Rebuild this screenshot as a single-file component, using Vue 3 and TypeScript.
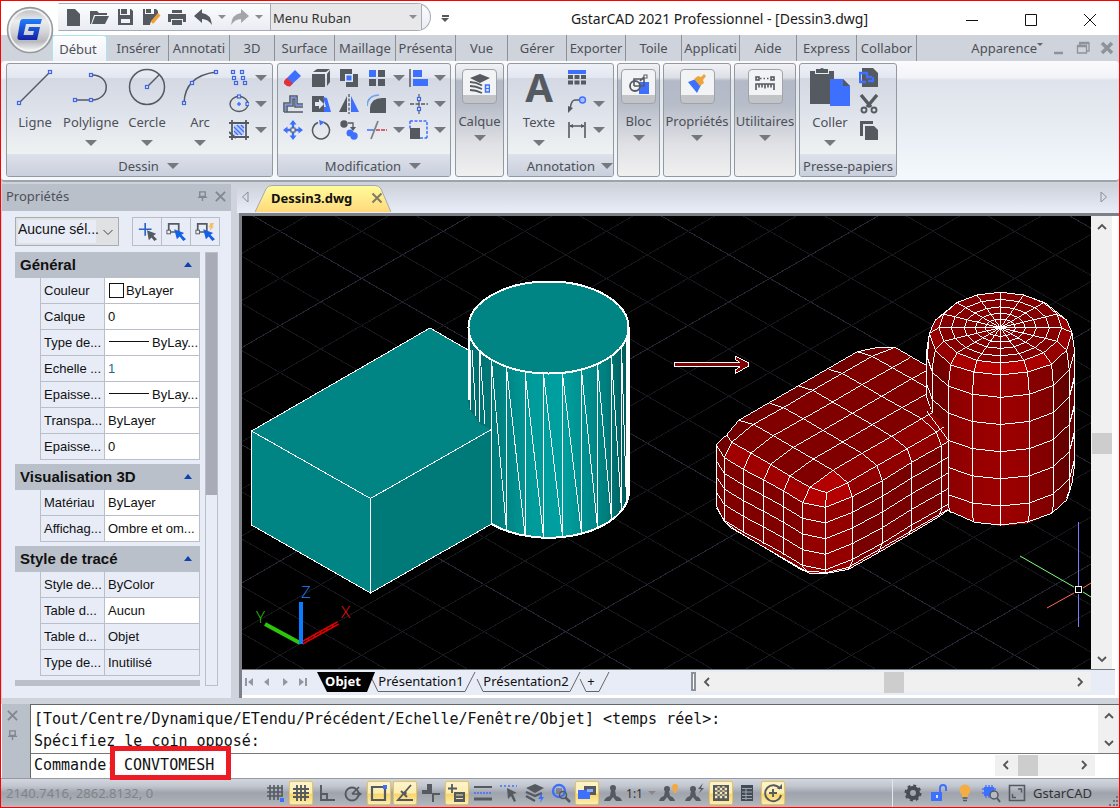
<script setup lang="ts">
import { ref } from 'vue'

interface Tool { icon: string; label: string; drop?: boolean }
interface PropRow { name: string; value: string; kind?: 'color' | 'ltype' | 'blue' | 'locked' }
interface PropSection { title: string; rows: PropRow[] }
interface Line { x1: number; y1: number; x2: number; y2: number; major: boolean }
type Pt = [number, number]

const tabs = ['Début', 'Insérer', 'Annotati', '3D', 'Surface', 'Maillage', 'Présenta', 'Vue', 'Gérer', 'Exporter', 'Toile', 'Applicati', 'Aide', 'Express', 'Collabor']
const activeTab = ref('Début')
const command = ref('CONVTOMESH')

const D = '#555a61'
const B = '#3d70ff'
const dot = (x: number, y: number) => `<rect x="${x - 1.5}" y="${y - 1.5}" width="3" height="3" fill="#dfe7ff" stroke="#3f66e0" stroke-width="1.2"/>`

const icons: Record<string, string> = {
  line: `<path d="M4 35L35 4" stroke="${D}" stroke-width="1.5"/>${dot(4, 35)}${dot(35, 4)}`,
  polyline: `<path d="M4 32H21C40 31 40 7 21 7" fill="none" stroke="${D}" stroke-width="1.5"/>${dot(4, 32)}${dot(20, 32)}${dot(20, 7)}`,
  circle: `<circle cx="20" cy="19" r="17.5" fill="none" stroke="${D}" stroke-width="1.5"/><path d="M20 19L32 7" stroke="${D}" stroke-width="1.5"/>${dot(20, 19)}`,
  arc: `<path d="M4 35Q5 8 36 4" fill="none" stroke="${D}" stroke-width="1.5"/>${dot(4, 35)}${dot(12, 15)}${dot(36, 4)}`,
  points: [[4, 4], [5, 10], [7, 15], [13, 4], [14, 10], [16, 15]].map(([x, y]) => dot(x, y)).join(''),
  ellipse: `<ellipse cx="10" cy="10" rx="9" ry="7.5" fill="none" stroke="${D}" stroke-width="1.4"/><path d="M10 8v4M8 10h4" stroke="${B}" stroke-width="1.4"/>${dot(10, 2.5)}${dot(18.5, 10)}`,
  hatch: `<path d="M0 3H20M0 17H20M3 0V20M17 0V20" stroke="${D}" stroke-width="1.8"/><path d="M5 5h10v10H5z" fill="#b9caff"/><path d="M5 7l8 8M8 5l7 7M5 11l4 4M12 5l3 3" stroke="${B}" stroke-width="1.3"/><path d="M0 12l7 6" stroke="${D}" stroke-width="2"/>`,
  erase: `<path d="M12 2L18 8L8 17L2 12Z" fill="${B}"/><path d="M4 10L10 15.500L7 18.500Q4 19 1 15.500V13Z" fill="#e0323c"/>`,
  box3d: `<path d="M1 6h13v13H1zM2 4L6 1H19L15 4zM16 6l3-4v12l-3 4z" fill="${D}"/>`,
  union: `<path d="M1 1h12v5h6v13H7v-6H1z" fill="${D}"/><path d="M6 6h8v8H6z" fill="#e3e8f2"/><path d="M7.500 7.500h5v5h-5z" fill="${B}"/>`,
  array: `<path d="M2 2h7v7H2z" fill="${B}"/><path d="M11 2h7v7h-7zM2 11h7v7H2zM11 11h7v7h-7z" fill="${D}"/>`,
  align: `<path d="M1 1V19" stroke="${D}" stroke-width="1.5"/><path d="M4 2h9v7H4zM4 11h15v7H4z" fill="${B}"/>`,
  offset: `<path d="M1 18V9H7V2H14V10H20M4 18V12H10V5H12V13H20M1 18H20" fill="none" stroke="${D}" stroke-width="1.6"/><path d="M2.500 17V10.500H8.500V3.500H13V11.500H20" fill="none" stroke="#6e93ff" stroke-width="1"/>`,
  stretch: `<path d="M1 2h12v16H1z" fill="${D}"/><path d="M4 8h4V5l5 5-5 5v-3H4z" fill="#e3e8f2"/><path d="M12 3l4 1 4 14h-7v-5h2z" fill="${B}"/>`,
  mirror: `<path d="M8 2V18H0z" fill="${D}"/><path d="M12 2V18H20z" fill="${B}"/><path d="M10 0V20" stroke="${D}" stroke-width="1.3" stroke-dasharray="3 1.500"/>`,
  fillet: `<path d="M3 19V14Q4 4 15 4H19V19z" fill="${D}"/><path d="M0 12Q1 1 12 1" fill="none" stroke="#6da4f2" stroke-width="1.7"/>`,
  breakat: `<path d="M1 10H19" stroke="${D}" stroke-width="1.5" stroke-dasharray="4 1.500"/><path d="M10 0V20" stroke="${D}" stroke-width="1.2"/>${dot(10, 5)}${dot(10, 15)}`,
  move: `<path d="M10 2V18M2 10H18" stroke="${B}" stroke-width="2.4"/><path d="M10 0l3.500 4.500h-7zM10 20l3.500-4.500h-7zM0 10l4.500-3.500v7zM20 10l-4.500-3.500v7z" fill="${B}"/><rect x="8" y="8" width="4" height="4" fill="#e5e9f4" stroke="${D}"/>`,
  rotate: `<path d="M13 2.500A8.500 8.500 0 1 1 7 2.500" fill="none" stroke="${D}" stroke-width="1.500"/><path d="M8 0l6 2-5 3.500z" fill="${B}"/>`,
  copy: `<circle cx="5" cy="4" r="3.700" fill="${D}"/><path d="M9 3h5v6" fill="none" stroke="${D}" stroke-width="1.300"/><path d="M14 11l-3-4h6z" fill="${D}"/><circle cx="11" cy="13" r="3.500" fill="${B}"/><circle cx="15" cy="16" r="3.700" fill="${B}"/>`,
  trim: `<path d="M0 10H7" stroke="${B}" stroke-width="1.600"/><path d="M9 10H20" stroke="#c93a44" stroke-width="1.600" stroke-dasharray="4 1"/><path d="M11 1L4 19" stroke="#7d828a" stroke-width="1.800"/>`,
  scale: `<path d="M1 1H18V18" fill="none" stroke="${B}" stroke-width="1.500" stroke-dasharray="3 1.500"/><path d="M1 1V9M11 18H18" stroke="${B}" stroke-width="1.500" stroke-dasharray="3 1.500"/><path d="M1 8h10v11H1z" fill="${D}"/>`,
  layers: `<path d="M10 0l10 4-10 5L0 4z" fill="${D}"/><path d="M0 8q6 0 12 3.500M0 12q6 0 12 3M0 16q6 0 12 3" fill="none" stroke="${D}" stroke-width="1.800"/><rect x="15.500" y="11" width="4" height="7" fill="#dfe7ff" stroke="${B}" stroke-width="1.500"/><path d="M15 14.500h5" stroke="${B}"/>`,
  block: `<path d="M10 8h10v12H10z" fill="${B}"/><circle cx="6" cy="12" r="5" fill="none" stroke="${D}" stroke-width="1.800"/><path d="M5 12V5h10v7H5M11 7l5-5" fill="none" stroke="${D}" stroke-width="1.600"/><rect x="15" y="1" width="3" height="3" fill="#fff" stroke="${D}"/>`,
  brush: `<path d="M1 8l8-3 5 6-4 8z" fill="${B}"/><path d="M7 5l4-3 3 1 3-3 2 2-3 4 1 3-4 3z" fill="#eda53c"/>`,
  measure: `<path d="M5 4.500h10" stroke="${D}" stroke-width="1.500" stroke-dasharray="1.500 2"/><rect x="1" y="3" width="3" height="3" fill="none" stroke="${D}" stroke-width="1.600"/><rect x="16" y="3" width="3" height="3" fill="none" stroke="${D}" stroke-width="1.600"/><path d="M1 16V10H19V16M4 10v3.500M7 10v3.500M10 10v4.500M13 10v3.500M16 10v3.500" fill="none" stroke="${D}" stroke-width="1.600"/>`,
  table: `<path d="M1 2h18v4H1z" fill="${B}"/><path d="M1 7h5v4H1zM7.500 7h5v4h-5zM14 7h5v4h-5zM1 12.500h5v4H1zM7.500 12.500h5v4h-5zM14 12.500h5v4h-5z" fill="${D}"/>`,
  leader: `<path d="M3 16Q4 6 8 6H13" fill="none" stroke="${D}" stroke-width="1.600"/><path d="M1 19V12l5 2z" fill="${D}"/><circle cx="15.500" cy="6" r="3" fill="#aabfff" stroke="${B}" stroke-width="1.400"/>`,
  dim: `<path d="M2 2V18M18 2V18M3 6H17" stroke="${D}" stroke-width="1.600"/><path d="M2 6l4-2v4zM18 6l-4-2v4z" fill="${D}"/>`,
  paste: `<path d="M0 3h5v3h14V3h5v33H0z" fill="${D}"/><path d="M6 1h4q2-2 4 0h4v4H6z" fill="${D}"/><path d="M20 11h13l7 7v20H20z" fill="${B}"/><path d="M33 11v7h7z" fill="${D}"/>`,
  link: `<path d="M3 0h11l5 5v14H3z" fill="${D}"/><path d="M0 5h8v4h5M1 6v8h6M9 13h5V9" fill="none" stroke="${B}" stroke-width="2.400"/>`,
  cut: `<path d="M2 1l10 12M18 1L8 13" stroke="${D}" stroke-width="3.400"/><circle cx="5" cy="16" r="2.500" fill="none" stroke="${D}" stroke-width="1.900"/><circle cx="15" cy="16" r="2.500" fill="none" stroke="${D}" stroke-width="1.900"/>`,
  copyclip: `<path d="M1 1h13v3H4v12H1z" fill="${D}"/><path d="M6 6h9l4 4v10H6z" fill="${D}"/>`,
  newfile: `<path d="M4 2h8l5 5v12H4z" fill="${D}"/>`,
  open: `<path d="M1 4h7l2 2h8v2H5L2 17H1z" fill="${D}"/><path d="M6 9h14l-4 8H3z" fill="${D}"/>`,
  save: `<path d="M3 2h2v6h10V2h1l2 2v14H3zM6 2h6v5H6zM6 12v4h9v-4z" fill="${D}" fill-rule="evenodd"/>`,
  saveas: `<path d="M2 2h2v5h9V2h2l2 2v6l-8 8H2zM5 2h5v4H5z" fill="${D}" fill-rule="evenodd"/><path d="M9 18l1-4 7-8 2.500 2.500-7 8z" fill="#efa03c"/><path d="M9 18l1-3 2 2z" fill="#fff"/>`,
  print: `<path d="M5 3h10v3H5zM1 7h18v8h-3v-3H4v3H1zM5 13h10v5H5z" fill="${D}"/>`,
  undo: `<path d="M9 2v4q9 1 10 12-4-6-10-6v4L1 9z" fill="${D}"/>`,
  redo: `<path d="M11 2v4Q2 7 1 18q4-6 10-6v4l8-7z" fill="#a2a5aa"/>`,
  pick: `<path d="M9 1v14M2 8h14" stroke="#2a63c8" stroke-width="1.800"/><path d="M11 9l10 4-3 2 4 4-3 2-3-4-3 3z" fill="${D}"/>`,
  select: `<path d="M3 2h11v9H3z" fill="none" stroke="${D}" stroke-width="1.900"/><rect x="1" y="9" width="4" height="4" fill="#e8ecf7" stroke="${D}"/><path d="M9 8l11 4-3 2 5 5-3 2-4-5-3 3z" fill="#1660e8"/>`,
  quick: `<path d="M3 2h10v9H3z" fill="none" stroke="${D}" stroke-width="1.900"/><rect x="1" y="9" width="4" height="4" fill="#e8ecf7" stroke="${D}"/><path d="M9 8l11 4-3 2 5 5-3 2-4-5-3 3z" fill="#1660e8"/><path d="M17 1h4l-2 4h2l-5 5 1-4h-2z" fill="#f5bf60"/>`,
  gridsnap: `<path d="M2 5H18M2 9H18M2 13H18M5 2V17M9 2V17M13 2V17M17 2V13" stroke="${D}" stroke-width="1.600"/><path d="M15 15h4v4h-4z" fill="${B}"/>`,
  grid: `<path d="M2 6H18M2 10H18M2 14H18M6 2V18M10 2V18M14 2V18" stroke="${D}" stroke-width="1.900"/>`,
  ortho: `<path d="M4 2V17H18M4 11h6v6" fill="none" stroke="${D}" stroke-width="1.900"/>`,
  polar: `<circle cx="9" cy="11" r="6.500" fill="none" stroke="${D}" stroke-width="1.900"/><path d="M9 11h9M9 11l7-7" stroke="${D}" stroke-width="1.700"/><path d="M19 11l-4-3v6z" fill="${D}"/>`,
  osnap: `<path d="M3 4h13v13H3z" fill="none" stroke="${D}" stroke-width="2.200"/><path d="M14 2h4v4h-4z" fill="${B}"/>`,
  otrack: `<path d="M16 2L3 17H18M6 8l6 6" fill="none" stroke="${D}" stroke-width="1.900"/><circle cx="10" cy="10" r="1.800" fill="${D}"/>`,
  cross: `<path d="M6 1h5v10H1V7h5z" fill="${D}"/><path d="M12 19v-8h7" fill="none" stroke="${D}" stroke-width="2"/>`,
  dyn: `<path d="M5 1v9M1 5.500h9" stroke="${D}" stroke-width="1.800"/><path d="M7 9h11v10H7z" fill="${D}"/><path d="M9 12h7M9 15.500h7" stroke="#f6e19a" stroke-width="1.200"/>`,
  lwt: `<path d="M1 4H19" stroke="${D}" stroke-width="2"/><path d="M1 10H19" stroke="${B}" stroke-width="1.500" stroke-dasharray="2 1"/><path d="M1 16H19" stroke="${D}" stroke-width="3"/>`,
  cycle: `<path d="M1 3H18" stroke="${B}" stroke-width="1.400" stroke-dasharray="2 2"/><path d="M8 5l10 5-4 1 3 7-2 1-3-6-3 3z" fill="${D}"/>`,
  isolate: `<path d="M10 1l9 4-9 5-9-5z" fill="${D}"/><path d="M1 9l9 4 7-3M1 13l9 5" fill="none" stroke="${D}" stroke-width="2.400"/><path d="M17 10l-4 6h3l-1 4 4-6h-2z" fill="${B}"/>`,
  look: `<circle cx="8" cy="8" r="6" fill="none" stroke="${B}" stroke-width="2.400"/><path d="M5 6h6M5 8h6M5 10h4" stroke="${D}"/><circle cx="12" cy="12" r="3.500" fill="none" stroke="${D}" stroke-width="1.500"/><path d="M14 14l5 5" stroke="${D}" stroke-width="2.500"/>`,
  windows: `<path d="M7 3h12v9H7z" fill="${D}"/><path d="M1 7h12v9H1z" fill="${B}"/><path d="M10 6h6v3h-6z" fill="#8caaff"/>`,
  person: `<circle cx="10" cy="5" r="3" fill="${D}"/><path d="M8 7h4l1 6q5 1 6 5h-6l-3-4-3 4H1q1-4 6-5z" fill="${D}"/>`,
  personlamp: `<circle cx="8" cy="6" r="3" fill="${D}"/><path d="M6 8h4l1 5q4 1 5 5h-5l-3-4-3 4H0q1-4 5-5z" fill="${D}"/><circle cx="16" cy="4" r="3" fill="#f4a83f"/><path d="M14.500 6h3v4h-3z" fill="#f4a83f"/>`,
  personbolt: `<circle cx="8" cy="6" r="3" fill="${D}"/><path d="M6 8h4l1 5q4 1 5 5h-5l-3-4-3 4H0q1-4 5-5z" fill="${D}"/><path d="M18 0l-5 6h3l-2 4 5-5h-3z" fill="${D}"/>`,
  checker: `<path d="M2 2h16v16H2z" fill="${D}"/><path d="M4 6h12M4 10h12M4 14h12" stroke="#f7e9b4" stroke-width="2.400" stroke-dasharray="2.400 2.400"/><path d="M6.400 8h9M6.400 12h9M6.400 4h9" stroke="#f7e9b4" stroke-width="1.600" stroke-dasharray="2.400 2.400"/>`,
  sheet: `<path d="M4 2h12v16H4z" fill="#434b57"/><path d="M5 5.500h10M5 9h10M5 12.500h10M5 15.500h10M9 5v12" stroke="#9da4ad"/>`,
  refresh: `<path d="M17 6A8 8 0 1 0 18 12" fill="none" stroke="${D}" stroke-width="1.900"/><path d="M14 6h5V1z" fill="${D}"/><path d="M10 6v8M6 10h8" stroke="${D}" stroke-width="1.900"/>`,
  gear: `<circle cx="10" cy="10" r="5" fill="none" stroke="#484d54" stroke-width="4"/><circle cx="10" cy="10" r="7.500" fill="none" stroke="#484d54" stroke-width="2" stroke-dasharray="3 2.890"/>`,
  lock: `<path d="M2 9h11v9H2z" fill="${B}"/><path d="M11 9V5q0-3 3-3t3 3v3" fill="none" stroke="${B}" stroke-width="1.900"/><path d="M7 12h2v3H7z" fill="#dce5ff"/>`,
  bulb: `<circle cx="10" cy="7" r="5.500" fill="#f4ad45"/><path d="M7 10h6v4H7z" fill="#f4ad45"/><path d="M7.500 15h5M8 17.500h4" stroke="${D}" stroke-width="1.500"/>`,
  hardware: `<path d="M3 4h10v9H3z" fill="${B}"/><path d="M1 6h14M1 10h14M5 2v13M8 2v13M11 2v13" stroke="${B}" stroke-width="1.300"/><circle cx="13" cy="12" r="4" fill="#b5bac4" stroke="${D}" stroke-width="1.500"/><path d="M16 15l3 4" stroke="${D}" stroke-width="2"/>`,
  full: `<path d="M2.500 2.500h15v15h-15z" fill="none" stroke="${D}" stroke-width="1.600"/><path d="M11 6h3.500v3.500M9 14.500H5.500V11" fill="none" stroke="${D}" stroke-width="1.500"/>`,
}

const quick = ['newfile', 'open', 'save', 'saveas', 'print']
const drawBig: Tool[] = [
  { icon: 'line', label: 'Ligne' },
  { icon: 'polyline', label: 'Polyligne', drop: true },
  { icon: 'circle', label: 'Cercle', drop: true },
  { icon: 'arc', label: 'Arc', drop: true },
]
const drawSmall = ['points', 'ellipse', 'hatch']
const modifyRows = [
  ['erase', 'box3d', 'union', 'array', 'align'],
  ['offset', 'stretch', 'mirror', 'fillet', 'breakat'],
  ['move', 'rotate', 'copy', 'trim', 'scale'],
]
const midGroups: Tool[] = [
  { icon: 'block', label: 'Bloc' },
  { icon: 'brush', label: 'Propriétés' },
  { icon: 'measure', label: 'Utilitaires' },
]

const sections: PropSection[] = [
  {
    title: 'Général',
    rows: [
      { name: 'Couleur', value: 'ByLayer', kind: 'color' },
      { name: 'Calque', value: '0' },
      { name: 'Type de...', value: 'ByLay...', kind: 'ltype' },
      { name: 'Echelle ...', value: '1', kind: 'blue' },
      { name: 'Epaisse...', value: 'ByLay...', kind: 'ltype' },
      { name: 'Transpa...', value: 'ByLayer' },
      { name: 'Epaisse...', value: '0' },
    ],
  },
  {
    title: 'Visualisation 3D',
    rows: [
      { name: 'Matériau', value: 'ByLayer' },
      { name: 'Affichag...', value: 'Ombre et om...' },
    ],
  },
  {
    title: 'Style de tracé',
    rows: [
      { name: 'Style de...', value: 'ByColor', kind: 'locked' },
      { name: 'Table d...', value: 'Aucun' },
      { name: 'Table d...', value: 'Objet', kind: 'locked' },
      { name: 'Type de...', value: 'Inutilisé', kind: 'locked' },
    ],
  },
]

const statusTools = ['gridsnap', 'grid', 'ortho', 'polar', 'osnap', 'otrack', 'cross', 'dyn', 'lwt', 'cycle', 'isolate', 'look', 'windows', 'person']
const statusTools2 = ['personlamp', 'personbolt', 'checker', 'sheet', 'refresh']
const statusOn = ['grid', 'osnap', 'otrack', 'dyn', 'windows', 'checker', 'refresh']
const statusRight = ['gear', 'lock', 'bulb', 'hardware', 'full']

/* Isometric floor grid: two families of parallel lines, every fifth one brighter. */
const slope = 0.577
const gridLines: Line[] = []
for (let k = -12; k <= 24; k++) {
  const at = (x: number, s: number) => 231.3 + s * slope * (x - 280) + 47.1 * k
  gridLines.push({ x1: 230, y1: at(230, 1), x2: 1100, y2: at(1100, 1), major: k % 5 === 0 })
  gridLines.push({ x1: 230, y1: at(230, -1), x2: 1100, y2: at(1100, -1), major: (k - 2) % 5 === 0 })
}

/* Faceted cylinder: verticals plus one diagonal per facet. */
const facets = [470, 479, 491.5, 506.5, 525, 543.5, 562.5, 581.5, 597.5, 611.5, 621.5, 626.5]
const rim = (x: number) => 46.6 * Math.sqrt(Math.max(0, 1 - ((x - 548.5) / 80.5) ** 2))
const facetLines = facets.map((x, i) => {
  const next = facets[i + 1] ?? 628
  return { x, top: 327.5 + rim(x), bottom: 490.5 + rim(x), nx: next, nb: 490.5 + rim(next) }
})

/* Smoothed box mesh, drawn at three units per pixel. */
const join = (pts: Pt[]) => pts.map((p) => p.join(',')).join(' ')
const ring: Pt[] = [[170, 497], [193, 533], [250, 568], [311, 600], [371, 633], [428, 668], [496, 682], [577, 650], [667, 602], [755, 547], [844, 497], [865, 484]]
const boxRings = [0, 1, 2, 3, 4].map((k) => join(ring.map(([x, y]) => [x, y + 47 * k])))
const boxLines = ([
  [[200, 465], [215, 487], [273, 519], [332, 553], [390, 588], [450, 622], [500, 638], [563, 608], [651, 557], [742, 506], [829, 456], [853, 440]],
  [[236, 421], [280, 433], [340, 467], [400, 502], [460, 537], [519, 571], [563, 608], [577, 650], [577, 845], [565, 868]],
  [[330, 370], [370, 383], [430, 416], [489, 451], [548, 486], [606, 520], [651, 557], [667, 602], [667, 790], [655, 818]],
  [[418, 319], [458, 331], [518, 366], [577, 400], [637, 434], [695, 469], [742, 506], [755, 547], [755, 745], [745, 765]],
  [[506, 268], [547, 280], [606, 314], [665, 349], [726, 383], [785, 416], [829, 456], [844, 497], [844, 690], [834, 712]],
  [[592, 215], [636, 229], [697, 263], [755, 296], [800, 322]],
  [[193, 725], [193, 533], [215, 487], [280, 433], [370, 383], [458, 331], [547, 280], [636, 229], [705, 202]],
  [[250, 757], [250, 568], [273, 519], [340, 467], [430, 416], [518, 366], [606, 314], [697, 263], [750, 233]],
  [[311, 793], [311, 600], [332, 553], [400, 502], [489, 451], [577, 400], [665, 349], [755, 296], [800, 272]],
  [[371, 825], [371, 633], [390, 588], [460, 537], [548, 486], [637, 434], [726, 383], [800, 342]],
  [[448, 880], [428, 860], [428, 668], [450, 622], [519, 571], [606, 520], [695, 469], [785, 416], [817, 398]],
  [[496, 878], [496, 682], [500, 638]],
  [[193, 725], [230, 752], [428, 872], [500, 878], [565, 862], [745, 758], [865, 688]],
] as Pt[][]).map(join)

/* Smoothed cylinder mesh. */
const polar = (r: number, i: number): Pt => [1021 + r * Math.cos((i * Math.PI) / 8), 143 + r * 0.577 * Math.sin((i * Math.PI) / 8)]
const capRings = [45, 75, 108, 147, 184].map((r) => join(Array.from({ length: 17 }, (_, i) => polar(r, i))))
const rimPts: Pt[] = [[1236, 158], [1220, 210], [1175, 253], [1103, 276], [1021, 285], [942, 276], [872, 255], [826, 210], [808, 160], [826, 120], [890, 68], [953, 45], [1021, 38], [1090, 45], [1155, 68], [1220, 120]]
const spokes = rimPts.map((p, i) => join([[1021, 143], polar(184, i), p]))
const rimRing = join([...rimPts, rimPts[0]])
const belt: Pt[] = [[800, 230], [817, 277], [865, 318], [937, 343], [1021, 352], [1108, 343], [1180, 316], [1228, 270], [1243, 218]]
const beltRings = [0, 1, 2, 3, 4].map((k) => join(belt.map(([x, y]) => [x, y + 81.5 * k] as Pt).filter(([x, y]) => x > 850 || y < 405)))
const staves = ([
  [[808, 160], [802, 230], [817, 277]],
  [[826, 210], [817, 260], [817, 400]],
  [[872, 255], [865, 318], [865, 680], [872, 698]],
  [[942, 276], [937, 343], [937, 705], [942, 727]],
  [[1021, 285], [1021, 738]],
  [[1103, 276], [1108, 343], [1108, 705], [1103, 728]],
  [[1175, 253], [1180, 316], [1180, 678], [1175, 700]],
  [[1220, 210], [1228, 270], [1228, 632], [1220, 655]],
] as Pt[][]).map(join)
</script>

<template>
  <div class="window">
    <header class="titlebar">
      <div class="quick">
        <button v-for="q in quick" :key="q" class="qbtn" :aria-label="q"><svg viewBox="0 0 20 20" v-html="icons[q]" /></button>
        <button class="qbtn" aria-label="Annuler"><svg viewBox="0 0 20 20" v-html="icons.undo" /></button>
        <button class="qdrop" aria-label="Liste annuler"><i class="tri" /></button>
        <button class="qbtn" aria-label="Rétablir"><svg viewBox="0 0 20 20" v-html="icons.redo" /></button>
        <button class="qdrop" aria-label="Liste rétablir"><i class="tri" /></button>
        <label class="workspace">
          <select aria-label="Espace de travail"><option>Menu Ruban</option></select>
          <i class="tri" />
        </label>
      </div>
      <button class="more" aria-label="Personnaliser"><i class="bar" /><i class="tri dark" /></button>
      <h1>GstarCAD 2021 Professionnel - [Dessin3.dwg]</h1>
      <button class="win" aria-label="Réduire"><svg viewBox="0 0 14 14"><path d="M1 7.500h12" /></svg></button>
      <button class="win" aria-label="Agrandir"><svg viewBox="0 0 14 14"><path d="M1.500 1.500h11v11h-11z" /></svg></button>
      <button class="win" aria-label="Fermer"><svg viewBox="0 0 14 14"><path d="M1 1l12 12M13 1L1 13" /></svg></button>
    </header>

    <button class="logo" aria-label="GstarCAD">
      <svg viewBox="0 0 48 48">
        <defs>
          <linearGradient id="orb" x1="0" y1="0" x2="0" y2="1"><stop offset="0" stop-color="#b6b8bb" /><stop offset=".3" stop-color="#ededee" /><stop offset=".55" stop-color="#d2d4d7" /><stop offset=".75" stop-color="#b7b9bc" /><stop offset="1" stop-color="#ffffff" /></linearGradient>
          <linearGradient id="gee" x1="0" y1="0" x2="0" y2="1"><stop offset="0" stop-color="#1f7fff" /><stop offset="1" stop-color="#1220a8" /></linearGradient>
        </defs>
        <circle cx="24" cy="24" r="22.500" fill="url(#orb)" stroke="#94979c" stroke-width="1.500" />
        <circle cx="24" cy="24" r="20.500" fill="none" stroke="#f4f4f5" stroke-width="1.500" />
        <path d="M17 13H36L34.500 18H20L17.500 29H27L28 25H22L23 21H34L31 34H14Q11 34 11.500 31L14 16Q14.500 13 17 13Z" fill="url(#gee)" />
      </svg>
    </button>

    <nav class="tabs">
      <div class="tablist">
        <button v-for="t in tabs" :key="t" :class="['tab', { active: t === activeTab }]" @click="activeTab = t">{{ t }}</button>
      </div>
      <button class="look">Apparence<i class="tri small" /></button>
      <button class="mdi" aria-label="Réduire le dessin"><svg viewBox="0 0 14 14"><path d="M2 12h9" stroke="#8e9299" stroke-width="2.500" /></svg></button>
      <button class="mdi" aria-label="Restaurer le dessin"><svg viewBox="0 0 14 14"><path d="M4 4V2h9v8h-2M1.500 5h9v7h-9z" fill="none" stroke="#8e9299" stroke-width="1.300" /><path d="M1 5h10M3 2h10" stroke="#8e9299" stroke-width="2.500" /></svg></button>
      <button class="mdi" aria-label="Fermer le dessin"><svg viewBox="0 0 14 14"><path d="M2 2l10 10M12 2L2 12" stroke="#8e9299" stroke-width="3.500" /></svg></button>
    </nav>

    <section class="ribbon">
      <div class="group draw">
        <div class="gbody">
          <button v-for="t in drawBig" :key="t.icon" class="big">
            <svg viewBox="0 0 40 38" v-html="icons[t.icon]" />
            <span>{{ t.label }}</span>
            <i v-if="t.drop" class="tri big-tri" />
          </button>
          <div class="minis two">
            <template v-for="s in drawSmall" :key="s">
              <button class="mini" :aria-label="s"><svg viewBox="0 0 20 20" v-html="icons[s]" /></button>
              <button class="mini" :aria-label="s + ' options'"><i class="tri big-tri" /></button>
            </template>
          </div>
        </div>
        <div class="gfoot">Dessin <i class="tri big-tri" /></div>
      </div>

      <div class="group modify">
        <div class="gbody">
          <div class="minis seven">
            <template v-for="row in modifyRows" :key="row[0]">
              <template v-for="(m, i) in row" :key="m">
                <button class="mini" :aria-label="m"><svg viewBox="0 0 20 20" v-html="icons[m]" /></button>
                <button v-if="i > 2" class="mini" :aria-label="m + ' options'"><i class="tri big-tri" /></button>
              </template>
            </template>
          </div>
        </div>
        <div class="gfoot">Modification <i class="tri big-tri" /></div>
      </div>

      <button class="group tall calque">
        <span class="tile"><svg viewBox="0 0 20 20" v-html="icons.layers" /></span>
        <span>Calque</span><i class="tri big-tri" />
      </button>

      <div class="group annot">
        <div class="gbody">
          <button class="big">
            <svg class="letter" viewBox="0 0 40 38"><text x="20" y="34" text-anchor="middle">A</text></svg>
            <span>Texte</span>
            <i class="tri big-tri" />
          </button>
          <div class="minis two">
            <button class="mini" aria-label="Tableau"><svg viewBox="0 0 20 20" v-html="icons.table" /></button><span />
            <button class="mini" aria-label="Repère"><svg viewBox="0 0 20 20" v-html="icons.leader" /></button>
            <button class="mini" aria-label="Options repère"><i class="tri big-tri" /></button>
            <button class="mini" aria-label="Cotation"><svg viewBox="0 0 20 20" v-html="icons.dim" /></button>
            <button class="mini" aria-label="Options cotation"><i class="tri big-tri" /></button>
          </div>
        </div>
        <div class="gfoot end">Annotation <i class="tri big-tri" /></div>
      </div>

      <button v-for="g in midGroups" :key="g.icon" :class="['group', 'tall', g.icon]">
        <span class="tile"><svg viewBox="0 0 20 20" v-html="icons[g.icon]" /></span>
        <span>{{ g.label }}</span><i class="tri big-tri" />
      </button>

      <div class="group clip">
        <div class="gbody">
          <button class="big">
            <svg viewBox="0 0 40 38" v-html="icons.paste" />
            <span>Coller</span>
            <i class="tri big-tri" />
          </button>
          <div class="minis one">
            <button class="mini" aria-label="Copier avec liaison"><svg viewBox="0 0 20 20" v-html="icons.link" /></button>
            <button class="mini" aria-label="Couper"><svg viewBox="0 0 20 20" v-html="icons.cut" /></button>
            <button class="mini" aria-label="Copier"><svg viewBox="0 0 20 20" v-html="icons.copyclip" /></button>
          </div>
        </div>
        <div class="gfoot plain">Presse-papiers</div>
      </div>
    </section>

    <main class="work">
      <aside class="props">
        <header class="phead">
          <span>Propriétés</span>
          <svg viewBox="0 0 12 12"><path d="M3 1h6v5H3zM1 7h10M6 7v4" /></svg>
          <svg viewBox="0 0 12 12"><path d="M1 1l10 10M11 1L1 11" stroke-width="2" /></svg>
        </header>
        <div class="pick">
          <label class="picksel">
            <select aria-label="Sélection"><option>Aucune sél...</option></select>
            <svg viewBox="0 0 12 12"><path d="M1.500 4L6 8.500L10.500 4" /></svg>
          </label>
          <div class="pickbtns">
            <button aria-label="Ajouter"><svg viewBox="0 0 22 22" v-html="icons.pick" /></button>
            <button aria-label="Sélectionner"><svg viewBox="0 0 22 22" v-html="icons.select" /></button>
            <button aria-label="Sélection rapide"><svg viewBox="0 0 22 22" v-html="icons.quick" /></button>
          </div>
        </div>
        <div class="plist">
          <div class="psections">
            <section v-for="s in sections" :key="s.title">
              <h2>{{ s.title }}<i class="up" /></h2>
              <table>
                <colgroup><col class="cname"><col></colgroup>
                <tbody>
                  <tr v-for="(r, i) in s.rows" :key="i">
                    <th scope="row">{{ r.name }}</th>
                    <td :class="r.kind"><i v-if="r.kind === 'color'" class="swatch" /><i v-if="r.kind === 'ltype'" class="rule" />{{ r.value }}</td>
                  </tr>
                </tbody>
              </table>
            </section>
            <div class="nextbar" />
          </div>
          <div class="pscroll"><i /></div>
        </div>
      </aside>

      <section class="doc">
        <div class="strip">
          <svg class="nav" viewBox="0 0 10 12"><path d="M7 1v10L1.500 6z" /></svg>
          <button class="doctab">
            <svg class="shape" viewBox="0 0 136 27" preserveAspectRatio="none">
              <defs><linearGradient id="gold" x1="0" y1="0" x2="0" y2="1"><stop offset="0" stop-color="#fffc9c" /><stop offset="1" stop-color="#ffd97b" /></linearGradient></defs>
              <path d="M0 27L11 4Q13 .5 17 .5H120Q124 .5 126 4L136 27" fill="url(#gold)" stroke="#a5a9b4" />
            </svg>
            <span>Dessin3.dwg</span>
            <svg class="x" viewBox="0 0 12 12"><path d="M1.500 1.500l9 9M10.500 1.500l-9 9" /></svg>
          </button>
          <svg class="nav right" viewBox="0 0 10 12"><path d="M3 1v10L8.500 6z" /></svg>
        </div>
        <div class="frame">
          <div class="canvasrow">
            <svg class="canvas" viewBox="242 216 849 453" preserveAspectRatio="xMidYMid slice">
              <defs>
                <linearGradient id="teal" x1="468" x2="629" y1="0" y2="0" gradientUnits="userSpaceOnUse">
                  <stop offset="0" stop-color="#006c6c" /><stop offset=".12" stop-color="#007676" /><stop offset=".4" stop-color="#009b9b" /><stop offset=".58" stop-color="#00a0a0" /><stop offset=".85" stop-color="#008080" /><stop offset="1" stop-color="#005656" />
                </linearGradient>
                <linearGradient id="red" x1="800" x2="1243" y1="0" y2="0" gradientUnits="userSpaceOnUse">
                  <stop offset="0" stop-color="#6c0000" /><stop offset=".14" stop-color="#740000" /><stop offset=".15" stop-color="#8c0000" /><stop offset=".31" stop-color="#960000" /><stop offset=".5" stop-color="#9c0000" /><stop offset=".69" stop-color="#960000" /><stop offset=".7" stop-color="#880000" /><stop offset=".85" stop-color="#800000" /><stop offset=".86" stop-color="#6c0000" /><stop offset="1" stop-color="#600000" />
                </linearGradient>
              </defs>
              <g shape-rendering="crispEdges">
                <line v-for="(l, i) in gridLines" :key="i" :x1="l.x1" :y1="l.y1" :x2="l.x2" :y2="l.y2" :class="l.major ? 'gmajor' : 'gminor'" />
              </g>

              <g shape-rendering="crispEdges" stroke="#fff" stroke-linejoin="round">
                <path d="M430 328L548 396L491.500 429.500L370.500 498.500L251.500 431Z" fill="#008484" />
                <path d="M251.500 431L370.500 498.500V593L251.500 525Z" fill="#008484" />
                <path d="M370.500 498.500L491.500 429.500V524L370.500 593Z" fill="#007979" />
                <path d="M468 327V400L470 410L480 424L491.500 430V524A80.500 46.600 0 0 0 629 490V327Z" fill="url(#teal)" stroke="none" />
                <g fill="none">
                  <template v-for="(f, i) in facetLines" :key="f.x">
                    <path v-if="i > 1" :d="`M${f.x} ${f.top}V${f.bottom}M${f.x} ${f.top}L${f.nx} ${f.nb}`" />
                  </template>
                  <path d="M470.500 350V410M479.500 352V422M472 350L476 416M480 352L485 424" />
                </g>
                <path d="M468.500 327V400" stroke-width="2" />
                <path d="M628.500 327V491" stroke-width="3" />
                <path d="M491.500 524A80.500 46.600 0 0 0 629 491" fill="none" stroke-width="2" />
                <ellipse cx="548.500" cy="327.500" rx="80" ry="46" fill="#008484" stroke-width="2" />
              </g>

              <g transform="translate(660 280) scale(.33333)" shape-rendering="crispEdges" stroke="#fff" stroke-width="3" fill="none">
                <path d="M705 202L800 257V350L817 400L865 450V690L834 712L745 765L655 818L565 868L500 880H448L210 742L193 725L170 680V492L200 465L236 421L592 215L656 202Z" fill="#800000" />
                <g stroke="none">
                  <path d="M170 492L200 465L236 421L592 215L656 202L705 202L636 229L280 433L215 487L193 531V725L170 680Z" fill="#700000" />
                  <path d="M215 487L193 533L428 668L450 622Z" fill="#a00000" />
                  <path d="M450 622L428 668L496 682L577 650L563 608L519 571Z" fill="#b40000" />
                  <path d="M563 608L577 650L865 484L853 440L817 398L519 571Z" fill="#900000" />
                  <path d="M428 668L496 682L577 650V845L565 868L500 880H448L428 865Z" fill="#940000" />
                  <path d="M577 650L865 484V690L577 855Z" fill="#780000" />
                  <path d="M800 345L817 400L865 440V484L853 440Z" fill="#700000" />
                </g>
                <polyline v-for="p in boxRings" :key="p" :points="p" />
                <polyline v-for="p in boxLines" :key="p" :points="p" />
                <path d="M800 257L705 202L656 202L592 215L236 421L200 465L170 492V680L193 725L210 742L448 880H500L565 868L655 818L745 765L834 712L865 690" />

                <path d="M800 345V215L808 160L826 120L890 68L953 45L1021 38L1090 45L1155 68L1220 120L1236 158L1243 208V560L1236 610L1220 660L1175 700L1105 730L1021 738L945 727L865 692V450L817 400Z" fill="url(#red)" stroke="none" />
                <polyline :points="rimRing" fill="#960000" />
                <path d="M942 276L951 241L1021 249L1091 241L1103 276L1021 285Z" fill="#b80000" />
                <path d="M872 255L891 218L951 241L942 276ZM1103 276L1091 241L1151 218L1175 253Z" fill="#aa0000" />
                <polyline :points="capRings[4]" fill="#840000" />
                <polyline v-for="p in capRings" :key="p" :points="p" />
                <polyline v-for="p in spokes" :key="p" :points="p" />
                <polyline v-for="p in beltRings" :key="p" :points="p" />
                <polyline v-for="p in staves" :key="p" :points="p" />
                <path d="M800 350V215L808 160L826 120L890 68M1155 68L1220 120L1236 158L1243 208V560L1236 610L1220 660L1175 700L1105 725L1021 735L945 727L865 692M1243 290L1228 350M1243 375L1228 435M1243 455L1228 515M1243 540L1228 600" />
                <path d="M43 247H240L226 238V228L266 248V258L226 281V270L240 260H43Z" fill="#800000" />
              </g>

              <g class="ucs">
                <path d="M265 624L300 643" stroke="#2bc70a" stroke-width="4" />
                <path d="M338 623L302 643" stroke="#e00000" stroke-width="4" />
                <path d="M338 623L302 643" stroke="#000" stroke-width="1" stroke-dasharray="5 2" />
                <path d="M301 602V644" stroke="#0a7cff" stroke-width="4" />
                <text x="256" y="623" fill="#2bc70a">Y</text>
                <text x="341" y="618" fill="#f01010">X</text>
                <text x="301" y="598" fill="#1c86ff">Z</text>
              </g>

              <g fill="none">
                <path d="M1078.500 522V586M1078.500 594V627" stroke="#7d7dff" />
                <path d="M1020 556L1074 587M1083 592L1091 597" stroke="#7dff7d" />
                <path d="M1047 608L1074 593M1083 588L1091 583" stroke="#ff6a55" />
                <rect x="1075.500" y="586.500" width="6" height="6" stroke="#fff" />
              </g>
            </svg>
            <div class="vscroll">
              <svg viewBox="0 0 12 12"><path d="M2 8l4-4 4 4" /></svg>
              <i class="thumb" />
              <svg viewBox="0 0 12 12"><path d="M2 4l4 4 4-4" /></svg>
            </div>
          </div>
          <div class="layouts">
            <div class="navs">
              <svg viewBox="0 0 10 10"><path d="M1 1h2v8H1zM9 1v8L4 5z" /></svg>
              <svg viewBox="0 0 10 10"><path d="M7 1v8L2 5z" /></svg>
              <svg viewBox="0 0 10 10"><path d="M3 1v8l5-4z" /></svg>
              <svg viewBox="0 0 10 10"><path d="M7 1h2v8H7zM1 1v8l5-4z" /></svg>
            </div>
            <button class="lt first"><svg viewBox="0 0 58 20" preserveAspectRatio="none"><path d="M0 0H58L50 20H10Z" fill="#000" /></svg><span>Objet</span></button>
            <button class="lt wide"><svg viewBox="0 0 106 20" preserveAspectRatio="none"><path d="M1 7L7 19.500H94L104 0" /></svg><span>Présentation1</span></button>
            <button class="lt wide"><svg viewBox="0 0 106 20" preserveAspectRatio="none"><path d="M1 7L7 19.500H94L104 0" /></svg><span>Présentation2</span></button>
            <button class="lt plus"><svg viewBox="0 0 32 20" preserveAspectRatio="none"><path d="M1 7L7 19.500H20L30 0" /></svg><span>+</span></button>
            <i class="split" />
            <div class="hscroll">
              <svg viewBox="0 0 12 12"><path d="M8 2L4 6l4 4" /></svg>
              <i class="thumb" />
              <svg viewBox="0 0 12 12"><path d="M4 2l4 4-4 4" /></svg>
            </div>
          </div>
        </div>
      </section>
    </main>

    <section class="cmd">
      <div class="gutter">
        <svg viewBox="0 0 12 12"><path d="M1 1l10 10M11 1L1 11" stroke-width="2" /></svg>
        <svg viewBox="0 0 12 12"><path d="M3 1h6v5H3zM1 7h10M6 7v4" stroke-width="1.500" /></svg>
      </div>
      <div class="cmdbody">
        <div class="log">
          <div class="lines">
            <p>[Tout/Centre/Dynamique/ETendu/Précédent/Echelle/Fenêtre/Objet] &lt;temps réel&gt;:</p>
            <p>Spécifiez le coin opposé:</p>
          </div>
          <div class="vscroll">
            <svg viewBox="0 0 12 12"><path d="M2 8l4-4 4 4" /></svg>
            <svg viewBox="0 0 12 12"><path d="M2 4l4 4 4-4" /></svg>
          </div>
        </div>
        <div class="prompt">
          <label for="cmdline">Commande:</label>
          <div class="hl"><input id="cmdline" v-model="command" type="text" spellcheck="false"></div>
          <div class="hscroll short">
            <svg viewBox="0 0 12 12"><path d="M8 2L4 6l4 4" /></svg>
            <i class="thumb" />
            <svg viewBox="0 0 12 12"><path d="M4 2l4 4-4 4" /></svg>
          </div>
        </div>
      </div>
    </section>

    <footer class="status">
      <span class="coords">2140.7416, 2862.8132, 0</span>
      <button v-for="s in statusTools" :key="s" :class="['st', { on: statusOn.includes(s) }]" :aria-label="s"><svg viewBox="0 0 20 20" v-html="icons[s]" /></button>
      <button class="ratio">1:1<i class="tri small pale" /></button>
      <button v-for="s in statusTools2" :key="s" :class="['st', { on: statusOn.includes(s) }]" :aria-label="s"><svg viewBox="0 0 20 20" v-html="icons[s]" /></button>
      <div class="sright">
        <button v-for="s in statusRight" :key="s" class="st" :aria-label="s"><svg viewBox="0 0 20 20" v-html="icons[s]" /></button>
        <span>GstarCAD</span>
        <svg class="grip" viewBox="0 0 12 12"><path d="M9 1h2v2H9zM6 5h2v2H6zM9 5h2v2H9zM2 9h2v2H2zM6 9h2v2H6zM9 9h2v2H9z" fill="#6f747c" /></svg>
      </div>
    </footer>
  </div>
</template>

<style>
html, body { margin: 0; }
</style>

<style scoped>
.window {
  box-sizing: border-box;
  position: relative;
  display: flex;
  flex-direction: column;
  min-height: 100vh;
  border: 1px solid #f00;
  background: #cfd3db;
  font-family: "Noto Sans", "Open Sans", sans-serif;
  font-size: 13px;
  color: #4c5058;
  overflow: hidden;
}
.window *, .window *::before { box-sizing: border-box; }
button, select, input { font: inherit; color: inherit; border: 0; margin: 0; padding: 0; background: none; }
button { display: flex; align-items: center; justify-content: center; white-space: nowrap; }
h1, h2, p { margin: 0; font-weight: 400; }
svg { display: block; flex: none; }
i { display: block; flex: none; }
.tri { width: 0; height: 0; border: 4px solid transparent; border-top-color: #8a8d92; border-bottom: 0; }
.tri.big-tri { border-width: 6px; border-bottom: 0; border-top-color: #75787d; }
.tri.small { border-width: 3px; border-bottom: 0; border-top-color: #666; }
.tri.pale { border-width: 4px; border-bottom: 0; border-top-color: #85898f; }
.tri.dark { border-top-color: #55585d; }

.titlebar { display: flex; align-items: center; height: 34px; background: #fff; }
.quick { display: flex; align-items: stretch; height: 28px; margin: 0 0 2px 57px; padding: 0 8px 0 1px; border: 1px solid #a7abb5; border-left-color: transparent; border-radius: 0 16px 16px 0; background: linear-gradient(#fdfdfe, #e9ecf3); }
.qbtn { width: 26px; }
.qbtn svg { width: 20px; height: 20px; }
.qdrop { width: 11px; }
.workspace { position: relative; display: flex; align-items: center; width: 152px; margin-left: 6px; border: solid #a7abb5; border-width: 0 1px; background: #e8e8ea; }
.workspace select { appearance: none; width: 100%; padding: 2px 0 0 2px; color: #333; }
.workspace .tri { position: absolute; right: 4px; }
.more { flex-direction: column; gap: 1px; width: 28px; }
.more .bar { width: 7px; height: 2px; background: #55585d; }
h1 { flex: 1; text-align: center; font-size: 14px; color: #1a1a1a; padding: 0 0 0 38px; }
.win { width: 59px; height: 34px; padding-top: 3px; }
.win svg { width: 14px; height: 14px; fill: none; stroke: #111; }

.logo { position: absolute; left: 5px; top: 5px; z-index: 2; width: 48px; height: 48px; }
.logo svg { width: 48px; height: 48px; }

.tabs { display: flex; height: 26px; padding-left: 51px; align-items: stretch; background: #cfd3db; }
.tablist { display: grid; grid-template-columns: 57px 60px 61px 45px 60px 61px 60px 52px 59px 59px 56px 58px 57px 60px 60px; }
.tab { min-width: 0; overflow: hidden; border-right: 1px solid #8c9098; }
.tab.active { margin-right: 2px; padding-right: 3px; border: 1px solid #a9e6ef; border-bottom: 0; border-radius: 3px 3px 0 0; background: linear-gradient(#fdfdfe, #eef0f6); }
.look { margin-left: auto; align-items: center; gap: 0; }
.look .tri { margin: 0 4px 8px 0; }
.mdi { width: 24px; }
.mdi svg { width: 14px; height: 14px; }

.ribbon { display: flex; gap: 4px; height: 121px; padding: 2px 4px 3px 5px; border: solid #9ea2aa; border-width: 0 0 2px; border-radius: 4px; background: linear-gradient(#fbfbfd 0, #f3f4f9 14%, #dfe4ec 16%, #e6ebf2 50%, #f4f9fd 100%); }
.group { display: flex; flex: none; flex-direction: column; border: 1px solid #94989f; border-radius: 3px; background: linear-gradient(#edf0f6 0, #e3e7f0 12%, #d3d8e3 13%, #dfe3eb 45%, #eff2f2 80%); overflow: hidden; }
.gbody { display: flex; flex: 1; }
.gfoot { display: flex; align-items: center; justify-content: center; gap: 8px; height: 22px; padding: 2px 0 0 18px; background: linear-gradient(#dde1ea, #c9cfdc); }
.gfoot.end { justify-content: flex-end; gap: 6px; }
.gfoot.plain { padding-left: 0; }
.draw { width: 267px; }
.modify { width: 174px; }
.calque { width: 49px; }
.annot { width: 107px; margin-left: -1px; }
.block { width: 43px; margin-left: -1px; }
.brush { width: 68px; margin-left: -1px; }
.measure { width: 62px; margin-left: -1px; }
.clip { width: 98px; margin-left: -1px; }
.big { flex-direction: column; justify-content: flex-start; width: 56px; padding-top: 4px; }
.draw .big:nth-child(4) { width: 50px; }
.draw .minis { margin-left: 3px; }
.big > svg { width: 40px; height: 38px; margin-bottom: 6px; }
.big span, .tall span + span { line-height: 20px; }
.big .tri { margin-top: 8px; }
.annot .big { width: 62px; }
.annot .minis { margin-left: -4px; }
.clip .big { width: 60px; }
.letter { overflow: visible; }
.letter text { font: 700 40px "Noto Sans", sans-serif; fill: #555a61; }
.minis { display: grid; grid-auto-rows: 26px; align-content: start; padding-top: 1px; }
.two { grid-template-columns: 22px 22px; }
.one { grid-template-columns: 18px; }
.seven { grid-template-columns: 28px 28px 28px 28px 16px 24px 18px; padding-left: 1px; }
.mini svg { width: 20px; height: 20px; }
.tall { justify-content: flex-start; padding-top: 5px; background: linear-gradient(#f1f2f5 0, #dcdfe6 12%, #b3b9c7 15%, #b6bcc8 35%, #e0e1e5 72%, #f0f0f0 100%); }
.tile { display: flex; align-items: center; justify-content: center; width: 35px; height: 35px; padding-bottom: 6px; margin-bottom: 7px; border: 1px solid #a0a3a9; border-radius: 4px; background: linear-gradient(#f2f3f5 0 75%, #c3c4c7 77%); }
.tile svg { width: 20px; height: 20px; }
.tall > .tri { margin-top: 4px; }

.work { display: flex; flex: 1; padding: 2px 0 6px; min-height: 522px; }
.props { display: flex; flex-direction: column; width: 229px; margin: 0 8px 0 1px; background: #e8ecf7; }
.phead { display: flex; align-items: center; height: 27px; padding: 0 5px 3px 4px; gap: 7px; background: #b9c0ca; }
.phead span { flex: 1; }
.phead svg, .gutter svg { width: 11px; height: 11px; fill: none; stroke: #82868d; stroke-width: 1.5; }
.pick { display: flex; gap: 13px; padding: 6px 12px 0 13px; font: 14px "Liberation Sans", Arial, sans-serif; color: #111; }
.picksel { position: relative; display: flex; flex: none; align-items: center; width: 104px; height: 29px; border: 1px solid #a9acb1; background: #e0e1e3; }
.picksel select { appearance: none; width: 84px; height: 23px; margin: 0 0 0 2px; padding-bottom: 5px; background: linear-gradient(90deg, #e8ecf7 0 78px, #e0e1e3 78px); }
.picksel svg { position: absolute; right: 4px; width: 12px; height: 12px; fill: none; stroke: #444; }
.pickbtns { display: flex; flex: none; border: 1px solid #b8bdc8; }
.pickbtns button { width: 28px; }
.pickbtns button + button { width: 29px; border-left: 1px solid #b8bdc8; }
.pickbtns svg { width: 20px; height: 20px; }
.plist { display: flex; gap: 5px; padding: 6px 13px 0; flex: 1; font-family: "Liberation Sans", Arial, sans-serif; }
.psections { width: 185px; display: flex; flex-direction: column; gap: 4px; }
h2 { display: flex; align-items: center; justify-content: space-between; height: 26px; padding: 0 8px 1px 5px; background: #b9c0ca; font-size: 15px; font-weight: 700; color: #111; }
.up { width: 0; height: 0; border: 4px solid transparent; border-top: 0; border-bottom: 5px solid #0d41ae; }
table { width: 160px; margin-left: 25px; border-collapse: separate; border-spacing: 0; border-left: 1px solid #b9bec8; table-layout: fixed; font-size: 13px; line-height: 16px; color: #111; background: #fff; }
.cname { width: 64px; }
th, td { height: 26px; padding: 0 0 0 3px; border: solid #b9bec8; border-width: 0 1px 1px 0; font-weight: 400; text-align: left; white-space: nowrap; overflow: hidden; }
th { background: #e8ecf7; }
td i { display: inline-block; }
.swatch { width: 15px; height: 15px; margin: 0 2px 0 1px; border: 1px solid #111; vertical-align: -3px; }
.rule { width: 40px; height: 1px; margin: 0 3px 0 1px; background: #111; vertical-align: 5px; }
.blue { color: #1a6c98; }
.locked { background: #e8ecf7; }
.nextbar { height: 6px; background: #b9c0ca; }
.pscroll { width: 13px; border: 1px solid #b9bec8; height: 434px; }
.pscroll i { height: 242px; background: #a9acb7; }

.doc { display: flex; flex-direction: column; flex: 1; min-width: 0; }
.strip { display: flex; align-items: center; height: 29px; margin-left: -2px; background: linear-gradient(#cdd1da, #e9edf8); }
.nav { width: 10px; height: 12px; margin: 0 4px 3px; fill: none; stroke: #8b8f97; }
.nav.right { margin-left: auto; margin-right: 11px; }
.doctab { position: relative; width: 136px; height: 27px; justify-content: flex-start; gap: 19px; padding: 0 0 1px 16px; font-weight: 700; color: #111; }
.doctab .shape { position: absolute; inset: 0; width: 100%; height: 100%; }
.doctab span { position: relative; }
.doctab .x { position: relative; width: 12px; height: 12px; fill: none; stroke: #7e7a68; stroke-width: 2; }
.frame { display: flex; flex-direction: column; flex: 1; border: solid #7d8086; border-width: 3px 0 0 3px; background: #fff; }
.canvasrow { display: flex; flex: 1; min-height: 453px; }
.canvas { flex: 1; min-width: 0; background: #000; }
.gminor { stroke: #16161c; }
.gmajor { stroke: #262635; }
.ucs { fill: none; }
.ucs text { font: 300 17px "Open Sans", "Liberation Sans", sans-serif; }
.vscroll { display: flex; flex-direction: column; align-items: center; justify-content: space-between; width: 21px; padding: 5px 0 4px; background: #f0f0f0; }
.canvasrow .vscroll { margin-right: 7px; }
.vscroll svg, .hscroll svg { width: 12px; height: 12px; fill: none; stroke: #555; stroke-width: 1.8; }
.thumb { width: 20px; height: 21px; background: #cdcdcd; }
.layouts { display: flex; align-items: flex-start; height: 26px; margin: 0 4px 3px 0; padding-top: 2px; border-top: 1px solid #777; background: #e8ecf7; color: #111; }
.navs { display: flex; gap: 8px; padding: 5px 9px 0 2px; }
.navs svg { width: 10px; height: 10px; fill: #93979f; }
.lt { position: relative; height: 20px; padding-bottom: 2px; }
.lt svg { position: absolute; inset: 0; width: 100%; height: 100%; fill: none; stroke: #666; }
.lt span { position: relative; }
.first { width: 58px; padding-right: 6px; color: #fff; font-weight: 700; z-index: 1; }
.first svg { stroke: none; }
.wide { width: 106px; padding-right: 6px; margin-left: -1px; }
.first + .wide { margin-left: -4px; }
.plus { width: 32px; padding-right: 8px; margin-left: -3px; }
.split { width: 5px; height: 19px; margin-left: auto; border: 2px solid #8d919a; background: #fff; }
.hscroll { display: flex; align-items: center; justify-content: space-between; width: 395px; height: 20px; padding: 0 5px; background: #f0f0f0; }
.layouts .hscroll { margin-right: 24px; }

.cmd { display: flex; height: 74px; background: #fff; }
.gutter { display: flex; flex-direction: column; align-items: center; gap: 9px; width: 28px; padding: 6px 7px 0 0; margin-left: 1px; background: #b9c0ca; }
.cmdbody { flex: 1; display: flex; flex-direction: column; min-width: 0; border-top: 1px solid #666; border-left: 1px solid #666; font: 15px/22px "DejaVu Sans Mono", monospace; color: #111; }
.log { display: flex; height: 48px; }
.lines { flex: 1; padding: 3px 0 0 3px; white-space: pre; overflow: hidden; }
.prompt { position: relative; display: flex; align-items: center; flex: 1; padding: 0 0 2px 3px; border-top: 1px solid #777; }
.prompt .hscroll { width: 100px; height: 21px; margin: 0 24px 0 auto; }
.prompt .thumb { margin-right: 34px; }
.hl { position: absolute; left: 79px; top: -8px; width: 121px; height: 34px; border: 5px solid #ed1c24; background: #fff; display: flex; }
.hl input { width: 100%; padding: 4px 0 0 9px; outline: 0; font: 15px "DejaVu Sans Mono", monospace; }

.status { display: flex; align-items: center; height: 29px; border-top: 1px solid #9599a1; background: linear-gradient(#d3d6dd 0, #c1c6cf 25%, #9ea3ad 50%, #a9aeb4 75%, #b5b9bd 100%); }
.coords { width: 261px; padding-left: 5px; color: #80848a; }
.st { width: 26px; height: 26px; }
.st svg { width: 20px; height: 20px; }
.st.on { width: 24px; height: 24px; margin: 0 1px; border: 1px solid #e5c35e; border-radius: 2px; background: linear-gradient(#fdf4ca 0, #fcedb0 50%, #f9d565 55%, #fdeeaf 100%); }
.ratio { gap: 5px; width: 30px; font-size: 12px; color: #333; }
.sright { display: flex; align-items: center; height: 100%; margin-left: auto; padding-left: 7px; border-left: 1px solid #e5e7ea; color: #333; }
.sright span { margin-left: 3px; width: 74px; }
.grip { width: 12px; height: 12px; align-self: flex-end; }
</style>
